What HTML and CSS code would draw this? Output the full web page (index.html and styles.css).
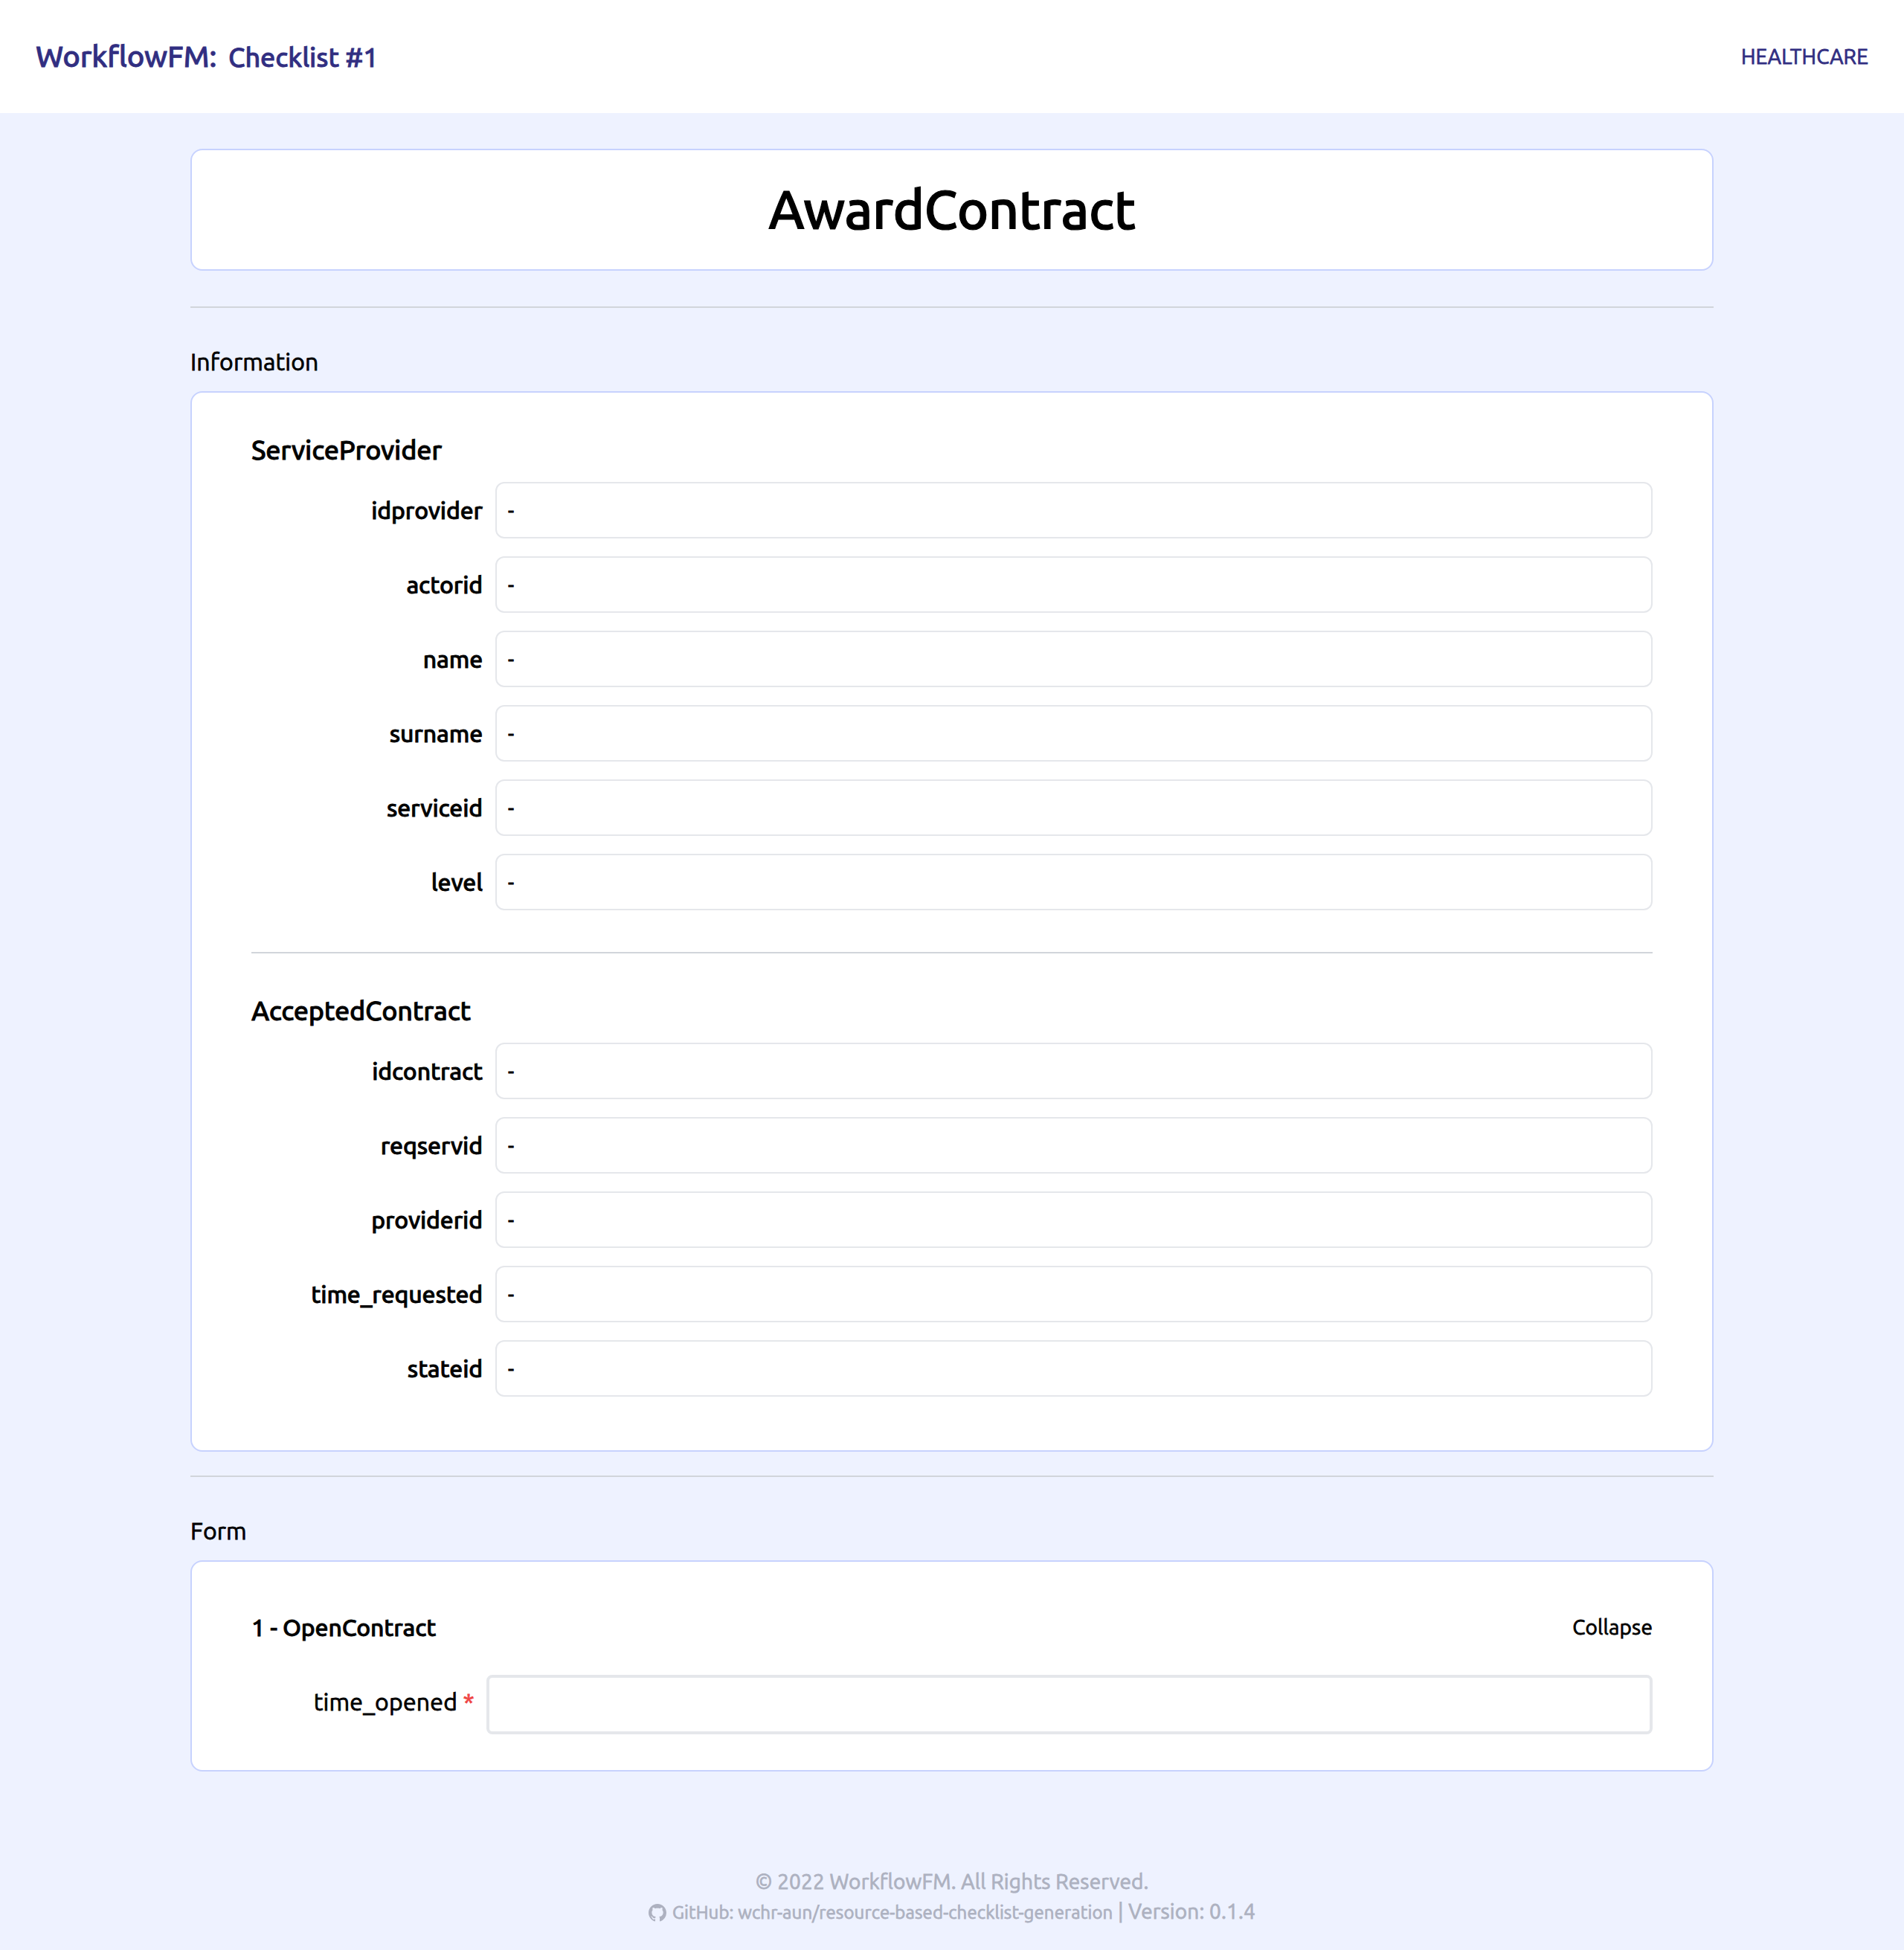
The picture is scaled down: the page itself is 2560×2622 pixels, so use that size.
FILE: index.html
```html
<!DOCTYPE html>
<html lang="en">
<head>
<meta charset="utf-8">
<title>WorkflowFM: Checklist #1</title>
<link rel="stylesheet" href="styles.css">
</head>
<body>
<header class="topbar">
  <div class="brand"><span class="brand-name">WorkflowFM:</span><span class="brand-page">Checklist #1</span></div>
  <nav class="domain">HEALTHCARE</nav>
</header>

<main class="content">
  <h1 class="card title-card">AwardContract</h1>
  <hr class="rule rule-title">

  <h2 class="section-label">Information</h2>
  <section class="card info-card">
    <h3 class="group-title">ServiceProvider</h3>
    <dl class="fields">
      <dt>idprovider</dt><dd>-</dd>
      <dt>actorid</dt><dd>-</dd>
      <dt>name</dt><dd>-</dd>
      <dt>surname</dt><dd>-</dd>
      <dt>serviceid</dt><dd>-</dd>
      <dt>level</dt><dd>-</dd>
    </dl>
    <hr class="rule rule-group">
    <h3 class="group-title">AcceptedContract</h3>
    <dl class="fields">
      <dt>idcontract</dt><dd>-</dd>
      <dt>reqservid</dt><dd>-</dd>
      <dt>providerid</dt><dd>-</dd>
      <dt>time_requested</dt><dd>-</dd>
      <dt>stateid</dt><dd>-</dd>
    </dl>
  </section>
  <hr class="rule rule-section">

  <h2 class="section-label">Form</h2>
  <form class="card form-card">
    <div class="step-head">
      <h3 class="step-title">1 - OpenContract</h3>
      <span class="step-toggle">Collapse</span>
    </div>
    <div class="form-row">
      <label class="form-label" for="time_opened">time_opened <span class="required">*</span></label>
      <input class="form-input" id="time_opened" type="text">
    </div>
  </form>
</main>

<footer class="footer">
  <p>© 2022 WorkflowFM. All Rights Reserved.</p>
  <p><a class="repo"><svg class="repo-icon" viewBox="0 0 16 16" fill="currentColor"><path d="M8 0C3.58 0 0 3.58 0 8c0 3.54 2.29 6.53 5.47 7.59.4.07.55-.17.55-.38 0-.19-.01-.82-.01-1.49-2.01.37-2.53-.49-2.69-.94-.09-.23-.48-.94-.82-1.13-.28-.15-.68-.52-.01-.53.63-.01 1.08.58 1.23.82.72 1.21 1.87.87 2.33.66.07-.52.28-.87.51-1.07-1.78-.2-3.64-.89-3.64-3.95 0-.87.31-1.59.82-2.15-.08-.2-.36-1.02.08-2.12 0 0 .67-.21 2.2.82.64-.18 1.32-.27 2-.27s1.36.09 2 .27c1.53-1.04 2.2-.82 2.2-.82.44 1.1.16 1.92.08 2.12.51.56.82 1.27.82 2.15 0 3.07-1.87 3.75-3.65 3.95.29.25.54.73.54 1.48 0 1.07-.01 1.93-.01 2.2 0 .21.15.46.55.38A8.01 8.01 0 0 0 16 8c0-4.42-3.58-8-8-8z"/></svg>GitHub: wchr-aun/resource-based-checklist-generation</a> | Version: 0.1.4</p>
</footer>
</body>
</html>
```
FILE: styles.css
```css
* { box-sizing: border-box; }

body {
  margin: 0;
  min-height: 100vh;
  background: #eef2ff;
  color: #000;
  font: 400 28px/40px Ubuntu, "Noto Sans", sans-serif;
  letter-spacing: 0.15px;
  -webkit-text-stroke: 0.8px currentColor;
}

h1, h2, h3, p, dl, dt, dd { margin: 0; font-weight: inherit; }

.topbar {
  display: flex;
  align-items: center;
  justify-content: space-between;
  height: 152px;
  padding: 0 48px;
  background: #fff;
  color: #312e81;
}
.brand {
  display: flex;
  align-items: baseline;
  gap: 16px;
  font-weight: 500;
  line-height: 60px;
}
.brand-name { font-size: 40px; letter-spacing: -0.2px; }
.brand-page { font-size: 36px; letter-spacing: -0.12px; }

.content { width: 2048px; margin: 48px auto 0; }

.card {
  background: #fff;
  border: 2px solid #c7d2fe;
  border-radius: 16px;
}
.title-card {
  padding: 40px 0;
  font-size: 72px;
  font-weight: 500;
  line-height: 80px;
  letter-spacing: -0.48px;
  text-align: center;
  -webkit-text-stroke-width: 1.2px;
}

.rule { height: 2px; border: 0; background: #d1d5db; }
.rule-title { margin: 48px 0; }
.rule-group { margin: 56px 0 48px; }
.rule-section { margin: 32px 0 48px; }

.section-label {
  margin-bottom: 16px;
  font-size: 32px;
  line-height: 48px;
}

.info-card { padding: 48px 80px 72px; }
.group-title {
  margin-bottom: 14px;
  font-size: 36px;
  font-weight: 500;
  line-height: 58px;
  letter-spacing: -0.25px;
}
.fields {
  display: grid;
  grid-template-columns: 311px 1fr;
  gap: 24px 17px;
}
.fields dt {
  font-size: 32px;
  font-weight: 500;
  line-height: 76px;
  letter-spacing: -0.15px;
  text-align: right;
}
.fields dd {
  height: 76px;
  padding: 0 15px;
  border: 2px solid #e5e7eb;
  border-radius: 12px;
  line-height: 72px;
}

.form-card { padding: 64px 80px 48px; }
.step-head {
  display: flex;
  align-items: center;
  justify-content: space-between;
  height: 48px;
  margin-bottom: 40px;
}
.step-title {
  font-size: 32px;
  font-weight: 500;
  line-height: 48px;
  letter-spacing: -0.18px;
}
.form-row {
  display: grid;
  grid-template-columns: 300px 1fr;
  gap: 16px;
}
.form-label {
  font-size: 32px;
  line-height: 72px;
  letter-spacing: 0.2px;
  text-align: right;
}
.required { color: #ef4444; }
.form-input {
  width: 100%;
  height: 80px;
  border: 4px solid #e5e7eb;
  border-radius: 8px;
  background: #fff;
  font: inherit;
}

.footer {
  margin-top: 128px;
  color: #adb1c0;
  text-align: center;
}
.repo { font-size: 24px; }
.repo-icon {
  width: 24px;
  height: 24px;
  margin-right: 8px;
  vertical-align: -4px;
}
```
